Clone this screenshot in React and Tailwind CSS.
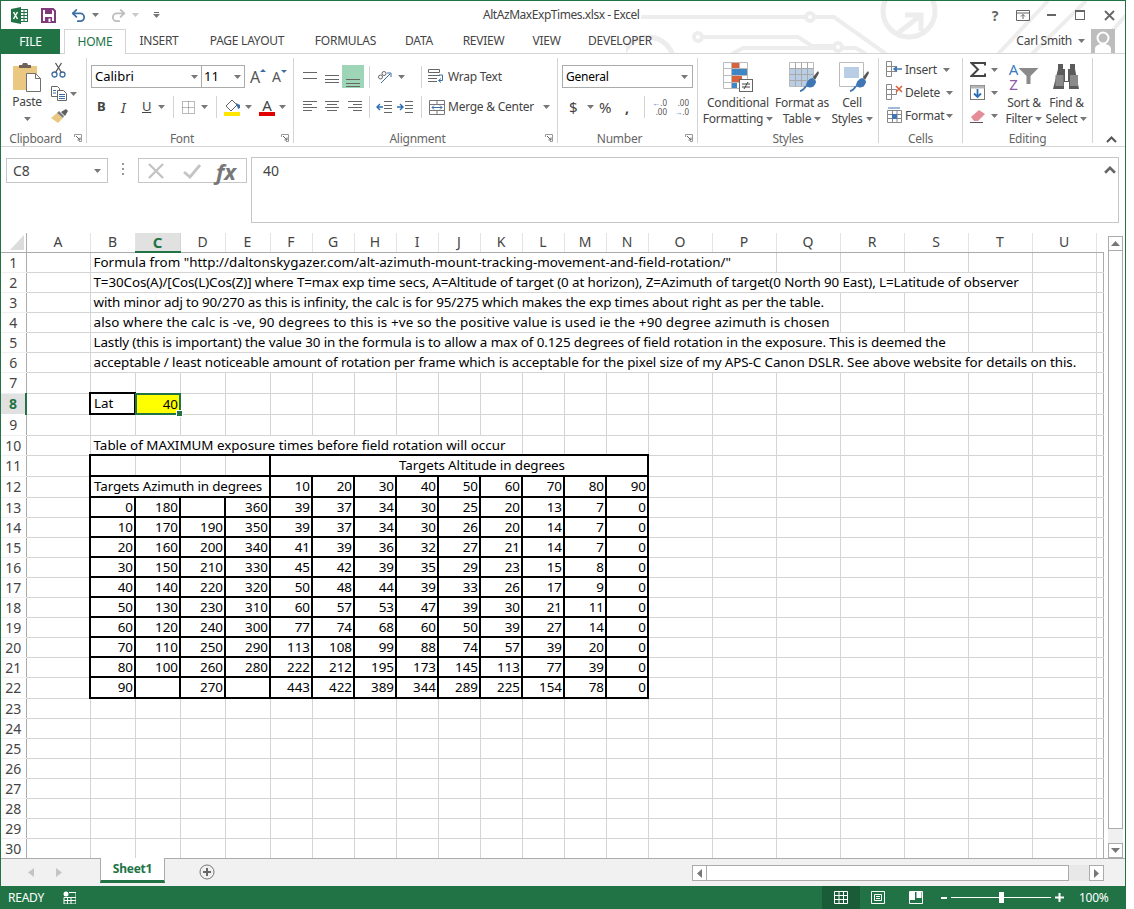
import { Undo2, Redo2 } from "lucide-react";

const grid = "border-r border-b border-[#d4d4d4] p-0";
const last = "border-r border-b border-[#d4d4d4] border-r-[#ababab] p-0";
const box = "border-2 border-black p-0 text-right pr-[1px]";

// text, columns it runs over, spacing so the line ends where Excel's does
const notes = {
  1: ['Formula from "http://daltonskygazer.com/alt-azimuth-mount-tracking-movement-and-field-rotation/"', 15, "tracking-[0.03px]"],
  2: ["T=30Cos(A)/[Cos(L)Cos(Z)] where T=max exp time secs, A=Altitude of target (0 at horizon), Z=Azimuth of target(0 North 90 East), L=Latitude of observer", 19, "tracking-[-0.1px]"],
  3: ["with minor adj to 90/270 as this is infinity, the calc is for 95/275 which makes the exp times about right as per the table.", 16, "tracking-[-0.137px]"],
  4: ["also where the calc is -ve, 90 degrees to this is +ve so the positive value is used ie the +90 degree azimuth is chosen", 16, "tracking-[0.12px]"],
  5: ["Lastly (this is important) the value 30 in the formula is to allow a max of 0.125 degrees of field rotation in the exposure. This is deemed the", 18, "tracking-[-0.1px]"],
  6: ["acceptable / least noticeable amount of rotation per frame which is acceptable for the pixel size of my APS-C Canon DSLR. See above website for details on this.", 20, "tracking-[-0.09px]"],
  10: ["Table of MAXIMUM exposure times before field rotation will occur", 10, "tracking-normal"],
};

const table = {
  13: [0, 180, "", 360, 39, 37, 34, 30, 25, 20, 13, 7, 0],
  14: [10, 170, 190, 350, 39, 37, 34, 30, 26, 20, 14, 7, 0],
  15: [20, 160, 200, 340, 41, 39, 36, 32, 27, 21, 14, 7, 0],
  16: [30, 150, 210, 330, 45, 42, 39, 35, 29, 23, 15, 8, 0],
  17: [40, 140, 220, 320, 50, 48, 44, 39, 33, 26, 17, 9, 0],
  18: [50, 130, 230, 310, 60, 57, 53, 47, 39, 30, 21, 11, 0],
  19: [60, 120, 240, 300, 77, 74, 68, 60, 50, 39, 27, 14, 0],
  20: [70, 110, 250, 290, 113, 108, 99, 88, 74, 57, 39, 20, 0],
  21: [80, 100, 260, 280, 222, 212, 195, 173, 145, 113, 77, 39, 0],
  22: [90, "", 270, "", 443, 422, 389, 344, 289, 225, 154, 78, 0],
};

const colWidths = [
  "w-[25px]", "w-[64px]", "w-[45px]", "w-[45px]", "w-[45px]", "w-[45px]",
  "w-[42px]", "w-[42px]", "w-[42px]", "w-[42px]", "w-[42px]", "w-[42px]", "w-[42px]", "w-[42px]", "w-[42px]",
  "w-[64px]", "w-[64px]", "w-[64px]", "w-[64px]", "w-[64px]", "w-[64px]", "w-[64px]", "w-[7px]",
];
const letters = "ABCDEFGHIJKLMNOPQRSTU".split("");
const rows = Array.from({ length: 30 }, (_, i) => i + 1);
const tallRows = [7, 8, 9, 11, 12, 22];

function Tail({ n }) {
  return Array.from({ length: n }, (_, i) => <td key={i} className={i === n - 1 ? last : grid} />);
}

function Cells({ n }) {
  if (notes[n]) {
    const [text, span, spacing] = notes[n];
    return (
      <>
        <td colSpan={span} className={grid + " pl-[3px] whitespace-nowrap overflow-hidden " + spacing}>{text}</td>
        <Tail n={21 - span} />
      </>
    );
  }
  if (n === 8) {
    return (
      <>
        <td className="border-2 border-black p-0 pl-[3px]">Lat</td>
        <td className="relative bg-[#ffff00] p-0 pr-[2px] text-right">
          40
          <div className="absolute -inset-px border-2 border-[#217346]" />
          <div className="absolute -right-[3px] -bottom-[3px] w-[5px] h-[5px] bg-[#217346] border border-white box-content" />
        </td>
        <Tail n={19} />
      </>
    );
  }
  if (n === 11) {
    return (
      <>
        <td className="border-y-2 border-l-2 border-black border-r border-r-[#d4d4d4] p-0" />
        <td className="border-y-2 border-black border-r border-r-[#d4d4d4] p-0" />
        <td className="border-y-2 border-black border-r border-r-[#d4d4d4] p-0" />
        <td className="border-y-2 border-r-2 border-black p-0" />
        <td colSpan={9} className="border-2 border-black p-0 pl-[46px] text-center tracking-[-0.1px]">Targets Altitude in degrees</td>
        <Tail n={8} />
      </>
    );
  }
  if (n === 12) {
    return (
      <>
        <td colSpan={4} className="border-2 border-black p-0 pl-[3px] whitespace-nowrap tracking-[-0.13px]">Targets Azimuth in degrees</td>
        {[10, 20, 30, 40, 50, 60, 70, 80, 90].map((v) => <td key={v} className={box}>{v}</td>)}
        <Tail n={8} />
      </>
    );
  }
  if (table[n]) {
    return (
      <>
        {table[n].map((v, i) => <td key={i} className={box}>{v}</td>)}
        <Tail n={8} />
      </>
    );
  }
  return <Tail n={21} />;
}

function Caret({ className = "" }) {
  return (
    <svg width="7" height="4" viewBox="0 0 7 4" className={"shrink-0 " + className}>
      <path d="M0 0h7L3.5 4z" fill="#777" />
    </svg>
  );
}

function Launcher() {
  return (
    <svg width="8" height="8" viewBox="0 0 8 8" className="absolute right-[4px] top-[5px]">
      <path d="M.5 3V.5H7.5V7.5H5" fill="none" stroke="#999" />
      <path d="M2 2l4 4M3.5 6H6V3.5" fill="none" stroke="#666" />
    </svg>
  );
}

function Group({ className, label, launcher, children }) {
  return (
    <div className={"h-[85px] flex flex-col border-r border-[#d4d4d4] shrink-0 " + className}>
      <div className="h-[71px]">{children}</div>
      <div className={"relative h-[14px] flex items-center justify-center pt-[5px] text-[#666] " + (launcher ? "pr-[16px]" : "")}>
        {label}
        {launcher && <Launcher />}
      </div>
    </div>
  );
}

function Sep() {
  return <div className="w-px h-[22px] bg-[#d4d4d4] shrink-0" />;
}

function Lines({ y, x = [], width = 14, height = 16, color = "#666", className = "" }) {
  return (
    <svg width={width} height={height} viewBox={`0 0 ${width} ${height}`} className={"shrink-0 " + className}>
      {y.map((v, i) => (
        <line key={i} x1={x[i] ? x[i][0] : 0} x2={x[i] ? x[i][1] : width} y1={v + 0.5} y2={v + 0.5} stroke={color} />
      ))}
    </svg>
  );
}

function ExcelLogo() {
  return (
    <svg width="17" height="17" viewBox="0 0 17 17" className="shrink-0">
      <rect x="9" y="2.5" width="7.5" height="12" fill="#fff" stroke="#217346" />
      <path d="M10 5.500h6M10 8.500h6M10 11.500h6M13 3v11" stroke="#217346" />
      <path d="M0 2L10 0V17L0 15z" fill="#217346" />
      <path d="M2.500 5l4 7M6.500 5l-4 7" stroke="#fff" strokeWidth="1.500" />
    </svg>
  );
}

function SaveIcon() {
  return (
    <svg width="15" height="15" viewBox="0 0 15 15" className="shrink-0">
      <path d="M1 1h11l2 2v11H1z" fill="#fff" stroke="#80397b" strokeWidth="2" />
      <rect x="4" y="1" width="7" height="5" fill="#80397b" />
      <rect x="4" y="9" width="7" height="5" fill="#80397b" />
      <rect x="7.500" y="10.500" width="2" height="3.500" fill="#fff" />
    </svg>
  );
}

function PasteIcon() {
  return (
    <svg width="30" height="30" viewBox="0 0 30 30">
      <rect x="1" y="4" width="24" height="24" fill="#eac882" />
      <path d="M7 6V3h3l1-2h4l1 2h3v3z" fill="#6e6259" />
      <path d="M14.500 11.500h9l5 5v13h-14z" fill="#fff" stroke="#707070" />
      <path d="M23.500 11.500v5h5" fill="none" stroke="#707070" />
    </svg>
  );
}

function Scissors() {
  return (
    <svg width="15" height="16" viewBox="0 0 15 16">
      <circle cx="3.500" cy="12.500" r="2.500" fill="none" stroke="#3b6ea5" strokeWidth="1.300" />
      <circle cx="11.500" cy="12.500" r="2.500" fill="none" stroke="#3b6ea5" strokeWidth="1.300" />
      <path d="M4.500 10.500L10.500 1M10.500 10.500L4.500 1" stroke="#555" strokeWidth="1.300" />
    </svg>
  );
}

function CopyIcon() {
  return (
    <svg width="16" height="15" viewBox="0 0 16 15">
      <path d="M.5.500h6l2 2v8h-8z" fill="#fff" stroke="#666" />
      <path d="M6.500 4.500h6l3 3v7h-9z" fill="#fff" stroke="#666" />
      <path d="M8 8.500h6M8 10.500h6M8 12.500h6M2 4.500h3M2 7h3" stroke="#3b6ea5" />
    </svg>
  );
}

function BrushIcon() {
  return (
    <svg width="17" height="15" viewBox="0 0 17 15">
      <path d="M0 9l6-5 6 5-5 5z" fill="#eac882" />
      <path d="M6 4l2-2 5 5-1 2z" fill="#7c7c7c" />
      <path d="M10 3l5-3 2 2-3 5z" fill="#5f5f5f" />
    </svg>
  );
}

function BorderIcon() {
  return (
    <svg width="13" height="13" viewBox="0 0 13 13" className="shrink-0">
      <path d="M.5.500h12v12H.5zM6.500.500v12M.5 6.500h12" fill="none" stroke="#777" strokeDasharray="1 1" />
    </svg>
  );
}

function FillIcon() {
  return (
    <svg width="17" height="18" viewBox="0 0 17 18" className="shrink-0">
      <path d="M2 8l6-6 5 5-6 6z" fill="#fff" stroke="#666" />
      <path d="M12 5l4 2v3l-2 1z" fill="#3b6ea5" />
      <rect x="0" y="14" width="16" height="4" fill="#ffe600" />
    </svg>
  );
}

function OrientIcon() {
  return (
    <svg width="16" height="14" viewBox="0 0 16 14" className="shrink-0">
      <circle cx="3.500" cy="7" r="2" fill="none" stroke="#666" />
      <circle cx="7" cy="3.500" r="2" fill="none" stroke="#666" />
      <path d="M4 13L13 4" stroke="#3b6ea5" />
      <path d="M10 3h4v4" fill="none" stroke="#3b6ea5" />
    </svg>
  );
}

function WrapIcon() {
  return (
    <svg width="17" height="15" viewBox="0 0 17 15" className="shrink-0">
      <path d="M.5.500h11v3H.5zM0 6.500h12M0 9.500h9M0 12.500h9" fill="none" stroke="#666" />
      <path d="M11 11.500h3.500V6H11" fill="none" stroke="#3b6ea5" />
      <path d="M13 9.500l-2.500 2 2.500 2" fill="none" stroke="#3b6ea5" />
    </svg>
  );
}

function MergeIcon() {
  return (
    <svg width="16" height="15" viewBox="0 0 16 15" className="shrink-0">
      <path d="M.5.500h15v14H.5zM.5 4.500h15M.5 10.500h15M8 .5v4M8 10.500v4" fill="none" stroke="#777" />
      <path d="M3 7.500h10M5 5.500l-2 2 2 2M11 5.500l2 2-2 2" fill="none" stroke="#3b6ea5" />
    </svg>
  );
}

function IndentIcon({ flip }) {
  return (
    <svg width="16" height="12" viewBox="0 0 16 12" className={"shrink-0 " + (flip ? "ml-[5px]" : "")}>
      <path d="M8 .5h8M8 4.500h8M8 7.500h8M8 11.500h8" stroke="#666" />
      {flip ? (
        <path d="M0 6h6M3 3l3 3-3 3" fill="none" stroke="#2a6fb3" strokeWidth="1.400" />
      ) : (
        <path d="M7 6H1M4 3L1 6l3 3" fill="none" stroke="#2a6fb3" strokeWidth="1.400" />
      )}
    </svg>
  );
}

function Decimals({ top, bottom, left }) {
  return (
    <div className="w-[16px] flex flex-col items-end text-[8px] leading-[9px] text-[#555] font-['Liberation_Sans',sans-serif] tracking-normal shrink-0">
      <div className="flex items-center">
        {left && <span className="text-[#2a6fb3]">←</span>}
        {top}
      </div>
      <div className="flex items-center">
        {!left && <span className="text-[#2a6fb3]">→</span>}
        {bottom}
      </div>
    </div>
  );
}

function CondIcon() {
  return (
    <svg width="30" height="30" viewBox="0 0 30 30">
      <path d="M.5.500h24v26H.5zM8.500.500v26M16.500.500v26M.5 6.500h24M.5 13.500h24M.5 20.500h24" fill="#fff" stroke="#bbb" />
      <rect x="9" y="1" width="7" height="5" fill="#d9623d" />
      <rect x="9" y="7" width="15" height="6" fill="#3f86c6" />
      <rect x="9" y="14" width="10" height="6" fill="#d9623d" />
      <rect x="9" y="21" width="5" height="5" fill="#3f86c6" />
      <rect x="16.500" y="17.500" width="13" height="12" fill="#fff" stroke="#666" />
      <path d="M19 22h8M19 25h8M25 20l-4 7" stroke="#444" />
    </svg>
  );
}

function BrushOverlay() {
  return (
    <>
      <path d="M17 24c0-5 4-8 7-8l3 3c0 4-4 9-10 5z" fill="#3f76b5" />
      <path d="M24 15l5-6 1 2-4 7z" fill="#555" />
    </>
  );
}

function TableIcon() {
  return (
    <svg width="30" height="30" viewBox="0 0 30 30">
      <path d="M.5.500h24v24H.5z" fill="#fff" stroke="#bbb" />
      <rect x="1" y="6" width="23" height="18" fill="#b9cde5" />
      <path d="M6.500.500v24M12.500.500v24M18.500.500v24M.5 6.500h24M.5 12.500h24M.5 18.500h24" stroke="#a8a8a8" />
      <BrushOverlay />
      <path d="M11 29c3 0 4-2 6-5" stroke="#3f76b5" strokeWidth="2" fill="none" />
    </svg>
  );
}

function StyleIcon() {
  return (
    <svg width="30" height="30" viewBox="0 0 30 30">
      <path d="M.5.500h24v24H.5z" fill="#fff" stroke="#bbb" />
      <rect x="5" y="5" width="15" height="11" fill="#b9cde5" />
      <BrushOverlay />
      <path d="M11 29c3 0 4-2 6-5" stroke="#3f76b5" strokeWidth="2" fill="none" />
    </svg>
  );
}

function CellIcon({ kind }) {
  return (
    <svg width="17" height="17" viewBox="0 0 17 17" className="shrink-0">
      {kind === "format" ? (
        <>
          <path d="M1.500 3.500h14v12h-14zM6.500 3.500v12M11 3.500v12M1.500 7.500h14M1.500 11.500h14" fill="#fff" stroke="#888" />
          <rect x="6" y="7" width="5" height="5" fill="#3f76b5" />
          <path d="M2 1h12" stroke="#3f76b5" />
        </>
      ) : (
        <>
          <path d="M.5.500h5v5h-5zM.5 5.500h5v5h-5zM.5 10.500h5v5h-5zM5.500 5.500h5v5h-5z" fill="#fff" stroke="#888" />
          {kind === "insert" ? (
            <path d="M16 8H8M11 5.500L8 8l3 2.500" fill="none" stroke="#3f76b5" strokeWidth="1.500" />
          ) : (
            <path d="M10 2l6 6M16 2l-6 6" stroke="#d9623d" strokeWidth="1.600" />
          )}
        </>
      )}
    </svg>
  );
}

function SigmaIcon() {
  return (
    <svg width="16" height="15" viewBox="0 0 16 15" className="shrink-0">
      <path d="M15 3.500V1H1.500L8 7.500 1.500 14H15v-2.500" fill="none" stroke="#444" strokeWidth="2" />
    </svg>
  );
}

function FillDown() {
  return (
    <svg width="15" height="15" viewBox="0 0 15 15" className="shrink-0">
      <rect x=".5" y=".5" width="14" height="14" fill="#fff" stroke="#777" />
      <rect x=".5" y=".5" width="14" height="3" fill="#b5b5b5" />
      <path d="M7.500 4v8M4 8.500l3.500 3.500L11 8.500" fill="none" stroke="#2a6fb3" strokeWidth="1.800" />
    </svg>
  );
}

function EraserIcon() {
  return (
    <svg width="16" height="15" viewBox="0 0 16 15" className="shrink-0">
      <path d="M1 9l8-7 6 4-7 7H4z" fill="#e48c98" />
      <path d="M0 14.500h13" stroke="#555" />
    </svg>
  );
}

function Binoculars() {
  return (
    <svg width="27" height="27" viewBox="0 0 27 27">
      <path d="M5 2h5v5h2v12h3V7h2V2h5v5l4 20h-10V20h-1v0h-4v7H0L5 7z" fill="#5b5b5b" />
      <rect x="2.500" y="13" width="8" height="11" fill="#8a8a8a" />
      <rect x="17" y="13" width="8" height="11" fill="#8a8a8a" />
    </svg>
  );
}

function Circuit() {
  return (
    <svg width="500" height="53" viewBox="626 0 500 53" className="absolute left-[625px] top-0 pointer-events-none">
      <g fill="none" stroke="#ededed" strokeWidth="4">
        <path d="M641 16H806M814 16H834L886 53" />
        <path d="M702 36H798L812 45H834M842 47H856L866 53" />
        <path d="M732 53L743 47H834" />
        <circle cx="810" cy="16" r="4" />
        <circle cx="698" cy="36" r="4" />
        <circle cx="838" cy="46" r="4" />
        <circle cx="909" cy="10" r="26" strokeWidth="5" />
        <path d="M898 32L920 15M905 14H921V30" strokeWidth="5" />
        <circle cx="648" cy="62" r="26" strokeWidth="5" />
        <path d="M998 53L1048 0M1032 53L1086 0M1092 53L1126 14" />
      </g>
    </svg>
  );
}

function Button({ children }) {
  return (
    <div className="w-[15px] h-[15px] bg-white border border-[#ababab] flex items-center justify-center shrink-0">
      {children}
    </div>
  );
}

export default function App() {
  return (
    <div className="relative w-[1126px] h-[909px] flex flex-col bg-white border-x border-t border-[#217346] overflow-hidden font-['Open_Sans',sans-serif] text-[12px] text-[#444] tracking-[-0.25px]">
      <Circuit />

      {/* title bar */}
      <div className="relative h-[28px] flex items-center shrink-0">
        <div className="ml-[10px]"><ExcelLogo /></div>
        <div className="ml-[13px]"><SaveIcon /></div>
        <Undo2 size={17} strokeWidth={2.5} color="#3b6ea5" className="ml-[14px]" />
        <Caret className="ml-[5px]" />
        <Redo2 size={17} strokeWidth={2.5} color="#bdbdbd" className="ml-[11px]" />
        <Caret className="ml-[5px] opacity-40" />
        <div className="ml-[14px] flex flex-col items-center gap-[1px]">
          <div className="w-[5px] h-px bg-[#666]" />
          <Caret />
        </div>
        <div className="ml-[323px] w-[160px] text-[#444] whitespace-nowrap tracking-[-0.45px]">AltAzMaxExpTimes.xlsx - Excel</div>
        <div className="ml-auto flex items-center text-[#666]">
          <span className="w-[14px] text-center font-bold text-[14px]">?</span>
          <svg width="14" height="11" viewBox="0 0 14 11" className="ml-[14px]">
            <path d="M.5.500h13v10H.5zM1 3h12M7 9V4.500M5 6.500l2-2 2 2" fill="none" stroke="#666" />
          </svg>
          <div className="ml-[17px] w-[9px] h-[2px] bg-[#666]" />
          <div className="ml-[19px] w-[10px] h-[10px] border border-[#666] border-t-2" />
          <svg width="11" height="11" viewBox="0 0 11 11" className="ml-[19px] mr-[10px]">
            <path d="M1 1l9 9M10 1l-9 9" stroke="#666" strokeWidth="1.800" />
          </svg>
        </div>
      </div>

      {/* tabs */}
      <div className="relative h-[25px] flex items-end shrink-0 border-b border-[#d4d4d4] text-[#444]">
        <div className="w-[59px] h-[25px] -mb-px bg-[#217346] text-white flex items-center justify-center">FILE</div>
        <div className="ml-[4px] w-[62px] h-[25px] -mb-px bg-white border-x border-t border-[#d4d4d4] text-[#217346] flex items-center justify-center">HOME</div>
        <div className="h-[24px] flex items-center whitespace-nowrap">
          <span className="w-[66px] text-center">INSERT</span>
          <span className="w-[110px] text-center">PAGE LAYOUT</span>
          <span className="w-[87px] text-center">FORMULAS</span>
          <span className="w-[60px] text-center">DATA</span>
          <span className="w-[69px] text-center">REVIEW</span>
          <span className="w-[57px] text-center">VIEW</span>
          <span className="w-[90px] text-center">DEVELOPER</span>
        </div>
        <div className="ml-auto h-[24px] flex items-center">
          <span>Carl Smith</span>
          <Caret className="ml-[6px]" />
          <div className="ml-[6px] mr-[10px] w-[24px] h-[24px] bg-[#bdbdbd] overflow-hidden relative">
            <svg width="24" height="24" viewBox="0 0 24 24">
              <circle cx="12" cy="9" r="5.500" fill="none" stroke="#fff" strokeWidth="2" />
              <path d="M4 24v-4c0-3 3-4 5-5h6c2 1 5 2 5 5v4z" fill="#fff" />
            </svg>
          </div>
        </div>
      </div>

      {/* ribbon */}
      <div className="relative h-[93px] shrink-0 flex pt-[4px] border-b border-[#d4d4d4]">
        <Group className="w-[86px]" label="Clipboard" launcher>
          <div className="flex pt-[4px]">
            <div className="w-[52px] flex flex-col items-center">
              <div className="-ml-[1px]"><PasteIcon /></div>
              <span className="mt-[1px]">Paste</span>
              <Caret className="mt-[6px]" />
            </div>
            <div className="flex flex-col gap-[8px] -ml-[2px]">
              <Scissors />
              <div className="flex items-center gap-[3px]"><CopyIcon /><Caret /></div>
              <BrushIcon />
            </div>
          </div>
        </Group>

        <Group className="w-[207px]" label="Font" launcher>
          <div className="flex flex-col">
            <div className="flex items-center h-[23px] mt-[7px] pl-[4px] text-black">
              <div className="w-[111px] h-[23px] border border-[#ababab] flex items-center justify-between pl-[3px] pr-[3px] font-['Lato',sans-serif] text-[13px] tracking-normal">
                Calibri <Caret />
              </div>
              <div className="w-[43px] h-[23px] border border-l-0 border-[#ababab] flex items-center justify-between pl-[2px] pr-[3px] font-['Lato',sans-serif] text-[13px] tracking-normal">
                11 <Caret />
              </div>
              <div className="ml-[5px] flex items-start text-[#555]">
                <span className="text-[16px] leading-none">A</span>
                <svg width="6" height="3" viewBox="0 0 6 3"><path d="M0 3h6L3 0z" fill="#3b6ea5" /></svg>
              </div>
              <div className="ml-[6px] flex items-start text-[#555]">
                <span className="text-[14px] leading-none">A</span>
                <svg width="6" height="3" viewBox="0 0 6 3"><path d="M0 0h6L3 3z" fill="#3b6ea5" /></svg>
              </div>
            </div>
            <div className="flex items-center h-[22px] mt-[8px] pl-[10px] text-[13px]">
              <span className="w-[9px] font-bold font-['Liberation_Sans',sans-serif]">B</span>
              <span className="ml-[15px] w-[9px] italic font-['Liberation_Serif',serif] text-[14px]">I</span>
              <span className="ml-[12px] w-[9px] underline font-['Liberation_Sans',sans-serif]">U</span>
              <Caret className="ml-[7px]" />
              <div className="ml-[8px]"><Sep /></div>
              <div className="ml-[8px]"><BorderIcon /></div>
              <Caret className="ml-[6px]" />
              <div className="ml-[8px]"><Sep /></div>
              <div className="ml-[7px]"><FillIcon /></div>
              <Caret className="ml-[4px]" />
              <div className="ml-[7px] w-[16px] flex flex-col items-center text-[15px] leading-[14px]">
                <span>A</span>
                <div className="w-[16px] h-[4px] bg-[#e00000]" />
              </div>
              <Caret className="ml-[4px]" />
            </div>
          </div>
        </Group>

        <Group className="w-[264px]" label="Alignment" launcher>
          <div className="flex flex-col">
            <div className="flex items-center h-[23px] mt-[7px] pl-[9px]">
              <Lines y={[3, 9]} />
              <Lines y={[6, 10, 13]} className="ml-[8px]" />
              <div className="ml-[3px] w-[22px] h-[23px] bg-[#9fd5b7] flex items-center justify-center">
                <Lines y={[12, 16, 19]} height={20} />
              </div>
              <div className="ml-[5px]"><Sep /></div>
              <div className="ml-[7px]"><OrientIcon /></div>
              <Caret className="ml-[5px]" />
              <div className="ml-[16px]"><Sep /></div>
              <div className="ml-[6px]"><WrapIcon /></div>
              <span className="ml-[3px]">Wrap Text</span>
            </div>
            <div className="flex items-center h-[22px] mt-[8px] pl-[9px]">
              <Lines y={[2, 5, 8, 11]} x={[[0, 14], [0, 9], [0, 14], [0, 9]]} />
              <Lines y={[2, 5, 8, 11]} x={[[0, 14], [2, 12], [0, 14], [2, 12]]} className="ml-[8px]" />
              <Lines y={[2, 5, 8, 11]} x={[[0, 14], [5, 14], [0, 14], [5, 14]]} className="ml-[9px]" />
              <div className="ml-[7px]"><Sep /></div>
              <div className="ml-[6px] flex"><IndentIcon /><IndentIcon flip /></div>
              <div className="ml-[8px]"><Sep /></div>
              <div className="ml-[7px]"><MergeIcon /></div>
              <span className="ml-[3px] whitespace-nowrap">Merge &amp; Center</span>
              <Caret className="ml-[9px]" />
            </div>
          </div>
        </Group>

        <Group className="w-[140px]" label="Number" launcher>
          <div className="flex flex-col">
            <div className="ml-[4px] mt-[7px] w-[131px] h-[23px] border border-[#ababab] flex items-center justify-between pl-[3px] pr-[4px] text-black">
              General <Caret />
            </div>
            <div className="flex items-center h-[22px] mt-[8px] pl-[11px]">
              <span className="w-[10px] text-[15px]">$</span>
              <Caret className="ml-[8px]" />
              <span className="ml-[5px] w-[18px] text-[15px]">%</span>
              <span className="ml-[8px] w-[6px] font-bold text-[14px]">,</span>
              <div className="ml-[13px]"><Sep /></div>
              <div className="ml-[6px]"><Decimals left top=".0" bottom=".00" /></div>
              <div className="ml-[6px]"><Decimals top=".00" bottom=".0" /></div>
            </div>
          </div>
        </Group>

        <Group className="w-[181px]" label="Styles">
          <div className="flex pt-[4px] text-center leading-[16px]">
            <div className="w-[80px] flex flex-col items-center">
              <CondIcon />
              <div className="mt-[3px]">Conditional</div>
              <div className="flex items-center gap-[3px]">Formatting <Caret /></div>
            </div>
            <div className="w-[48px] flex flex-col items-center">
              <div className="ml-[3px]"><TableIcon /></div>
              <div className="mt-[3px] whitespace-nowrap">Format as</div>
              <div className="flex items-center gap-[3px]">Table <Caret /></div>
            </div>
            <div className="w-[52px] flex flex-col items-center">
              <div className="ml-[3px]"><StyleIcon /></div>
              <div className="mt-[3px]">Cell</div>
              <div className="flex items-center gap-[3px]">Styles <Caret /></div>
            </div>
          </div>
        </Group>

        <Group className="w-[84px]" label="Cells">
          <div className="pl-[7px]">
            <div className="h-[23px] flex items-center"><CellIcon kind="insert" /><span className="ml-[2px] w-[37px]">Insert</span><Caret className="ml-[1px]" /></div>
            <div className="h-[23px] flex items-center"><CellIcon kind="delete" /><span className="ml-[2px] w-[40px]">Delete</span><Caret className="ml-[1px]" /></div>
            <div className="h-[23px] flex items-center"><CellIcon kind="format" /><span className="ml-[2px] w-[41px]">Format</span><Caret /></div>
          </div>
        </Group>

        <Group className="w-[130px]" label="Editing">
          <div className="flex">
            <div className="w-[40px] pl-[7px]">
              <div className="h-[23px] flex items-center gap-[5px]"><SigmaIcon /><Caret /></div>
              <div className="h-[23px] flex items-center gap-[6px]"><FillDown /><Caret /></div>
              <div className="h-[23px] flex items-center gap-[5px]"><EraserIcon /><Caret /></div>
            </div>
            <div className="w-[42px] flex flex-col items-center pt-[4px] leading-[16px]">
              <div className="h-[30px] flex items-start">
                <div className="flex flex-col items-center text-[15px] leading-[15px] font-['Liberation_Sans',sans-serif] tracking-normal">
                  <span className="text-[#3b7dc4]">A</span>
                  <span className="text-[#8e5aa8]">Z</span>
                </div>
                <svg width="21" height="16" viewBox="0 0 20 16" className="mt-[6px]"><path d="M0 0h20l-8 8v8H8V8z" fill="#8a8a8a" /></svg>
              </div>
              <div className="mt-[3px] whitespace-nowrap">Sort &amp;</div>
              <div className="flex items-center gap-[3px]">Filter <Caret /></div>
            </div>
            <div className="w-[43px] flex flex-col items-center pt-[4px] leading-[16px]">
              <div className="h-[30px]"><Binoculars /></div>
              <div className="mt-[3px] whitespace-nowrap">Find &amp;</div>
              <div className="flex items-center gap-[3px]">Select <Caret /></div>
            </div>
          </div>
        </Group>

        <div className="ml-auto mr-[8px] self-end mb-[3px]">
          <svg width="11" height="7" viewBox="0 0 11 7"><path d="M1 6l4.500-4.500L10 6" fill="none" stroke="#555" strokeWidth="2" /></svg>
        </div>
      </div>

      {/* formula bar */}
      <div className="h-[86px] shrink-0 flex items-start pt-[10px] pl-[5px] text-[#444]">
        <div className="w-[102px] h-[25px] mt-[1px] border border-[#c6c6c6] flex items-center justify-between pl-[6px] pr-[6px] font-['Lato',sans-serif] text-[14px] tracking-normal">
          C8 <Caret />
        </div>
        <div className="ml-[14px] mt-[6px] flex flex-col gap-[3px]">
          <div className="w-[2px] h-[2px] bg-[#999]" />
          <div className="w-[2px] h-[2px] bg-[#999]" />
          <div className="w-[2px] h-[2px] bg-[#999]" />
        </div>
        <div className="ml-[14px] mt-[1px] w-[109px] h-[25px] border border-[#c6c6c6] flex items-center pl-[8px]">
          <svg width="18" height="16" viewBox="0 0 18 16"><path d="M2 1l14 14M16 1L2 15" stroke="#c4c4c4" strokeWidth="2.400" /></svg>
          <svg width="20" height="16" viewBox="0 0 20 16" className="ml-[17px]"><path d="M2 9l6 5L18 2" fill="none" stroke="#c4c4c4" strokeWidth="2.800" /></svg>
          <span className="ml-[14px] font-['Liberation_Serif',serif] italic font-bold text-[22px] leading-none text-[#777] tracking-normal">fx</span>
        </div>
        <div className="ml-[4px] w-[868px] h-[66px] border border-[#c6c6c6] flex items-start justify-between pl-[11px] pr-[2px] pt-[2px] font-['Lato',sans-serif] text-[14px] tracking-normal">
          40
          <svg width="12" height="8" viewBox="0 0 11 7" className="mt-[6px]"><path d="M1 6l4.500-4.500L10 6" fill="none" stroke="#666" strokeWidth="2.400" /></svg>
        </div>
      </div>

      {/* sheet */}
      <div className="h-[625px] shrink-0 flex items-start font-['Lato',sans-serif] text-[13.4px] text-black tracking-normal">
        <table className="w-[1102px] table-fixed border-collapse leading-none shrink-0 [&_td]:pt-[1px]">
          <colgroup>
            {colWidths.map((w, i) => <col key={i} className={w} />)}
          </colgroup>
          <thead>
            <tr className="h-[19px] text-[#444] text-[14px]">
              <th className="p-0 border-r border-b border-[#ababab] font-normal align-bottom">
                <svg width="14" height="15" viewBox="0 0 14 15" className="ml-[9px] mb-[2px]"><path d="M14 0v15H0z" fill="#dcdcdc" /></svg>
              </th>
              {letters.map((l) =>
                l === "C" ? (
                  <th key={l} className="p-0 bg-[#e1e1e1] border-b-2 border-b-[#217346] border-r border-r-[#d4d4d4] font-bold text-[#217346] text-[15px]">{l}</th>
                ) : (
                  <th key={l} className="p-0 border-r border-r-[#e4e4e4] border-b border-b-[#ababab] font-normal">{l}</th>
                )
              )}
              <th className="p-0 border-b border-[#ababab]" />
            </tr>
          </thead>
          <tbody>
            {rows.map((n) => (
              <tr key={n} className={tallRows.includes(n) ? "h-[21px]" : "h-[20px]"}>
                {n === 8 ? (
                  <td className="p-0 text-center text-[14px] bg-[#e1e1e1] border-r-2 border-r-[#217346] font-bold text-[#217346]">{n}</td>
                ) : (
                  <td className="p-0 text-center text-[14px] text-[#444] border-r border-r-[#ababab] border-b border-b-[#efefef]">{n}</td>
                )}
                <td className={grid} />
                <Cells n={n} />
              </tr>
            ))}
          </tbody>
        </table>
        <div className="ml-[4px] mt-[3px] h-[622px] w-[15px] flex flex-col bg-[#f0f0f0] shrink-0">
          <Button>
            <svg width="9" height="5" viewBox="0 0 9 5"><path d="M0 5h9L4.500 0z" fill="#777" /></svg>
          </Button>
          <div className="h-[578px] bg-white border-x border-b border-[#ababab]" />
          <div className="mt-auto">
            <Button>
              <svg width="9" height="5" viewBox="0 0 9 5"><path d="M0 0h9L4.500 5z" fill="#777" /></svg>
            </Button>
          </div>
        </div>
      </div>

      {/* sheet tabs */}
      <div className="h-[28px] shrink-0 flex items-start bg-[#f1f1f1] border-t border-[#ababab]">
        <svg width="6" height="9" viewBox="0 0 6 9" className="ml-[27px] mt-[9px]"><path d="M6 0v9L0 4.500z" fill="#c4c4c4" /></svg>
        <svg width="6" height="9" viewBox="0 0 6 9" className="ml-[22px] mt-[9px]"><path d="M0 0v9l6-4.500z" fill="#c4c4c4" /></svg>
        <div className="ml-[38px] -mt-px w-[65px] h-[25px] bg-white border-x border-[#ababab] border-b-[3px] border-b-[#217346] flex items-center justify-center font-['Open_Sans',sans-serif] font-bold text-[#217346] text-[12px]">
          Sheet1
        </div>
        <svg width="16" height="16" viewBox="0 0 16 16" className="ml-[34px] mt-[5px]">
          <circle cx="8" cy="8" r="7" fill="none" stroke="#777" />
          <path d="M8 4v8M4 8h8" stroke="#666" strokeWidth="2" />
        </svg>
        <div className="ml-[477px] mt-[6px] flex h-[16px] w-[412px]">
          <div className="w-[15px] h-[16px] bg-white border border-[#ababab] flex items-center justify-center">
            <svg width="5" height="9" viewBox="0 0 5 9"><path d="M5 0v9L0 4.500z" fill="#777" /></svg>
          </div>
          <div className="flex-1 bg-white border-y border-r border-[#ababab]" />
          <div className="w-[20px] bg-[#e8e8e8]" />
          <div className="w-[15px] h-[16px] bg-white border border-[#ababab] flex items-center justify-center">
            <svg width="5" height="9" viewBox="0 0 5 9"><path d="M0 0v9l5-4.500z" fill="#777" /></svg>
          </div>
        </div>
      </div>

      {/* status bar */}
      <div className="h-[23px] shrink-0 flex items-center bg-[#217346] text-white">
        <span className="ml-[7px]">READY</span>
        <svg width="13" height="13" viewBox="0 0 13 13" className="ml-[19px]">
          <circle cx="3" cy="3" r="2.500" fill="#fff" />
          <path d="M6 1.500h7V13H1V6.500h12M1 9.500h12M4.500 6.500V13M8 6.500V13" fill="none" stroke="#fff" />
        </svg>
        <div className="ml-[746px] w-[38px] h-[23px] bg-[#1a5c38] flex items-center justify-center">
          <svg width="14" height="13" viewBox="0 0 14 13"><path d="M.5.500h13v12H.5zM.5 4.500h13M.5 8.500h13M5 .5v12M9.500.5v12" fill="none" stroke="#fff" /></svg>
        </div>
        <svg width="14" height="13" viewBox="0 0 14 13" className="ml-[11px]"><path d="M.5.500h13v12H.5zM3.500 3.500h7v6h-7zM5 5.500h4M5 7.500h4" fill="none" stroke="#fff" /></svg>
        <svg width="14" height="13" viewBox="0 0 14 13" className="ml-[24px]"><path d="M.5.500h13v12H.5z" fill="none" stroke="#fff" /><rect x="1" y="1" width="5" height="8" fill="#fff" /><rect x="7.500" y="1" width="5" height="6" fill="#fff" /></svg>
        <div className="ml-[18px] w-[6px] h-[2px] bg-white" />
        <div className="ml-[4px] w-[100px] h-[11px] flex items-center relative">
          <div className="w-full h-px bg-white" />
          <div className="absolute left-[48px] top-0 w-[5px] h-[11px] bg-white" />
        </div>
        <svg width="9" height="9" viewBox="0 0 9 9" className="ml-[4px]"><path d="M4.500 0v9M0 4.500h9" stroke="#fff" strokeWidth="2" /></svg>
        <span className="ml-[15px]">100%</span>
      </div>
    </div>
  );
}
